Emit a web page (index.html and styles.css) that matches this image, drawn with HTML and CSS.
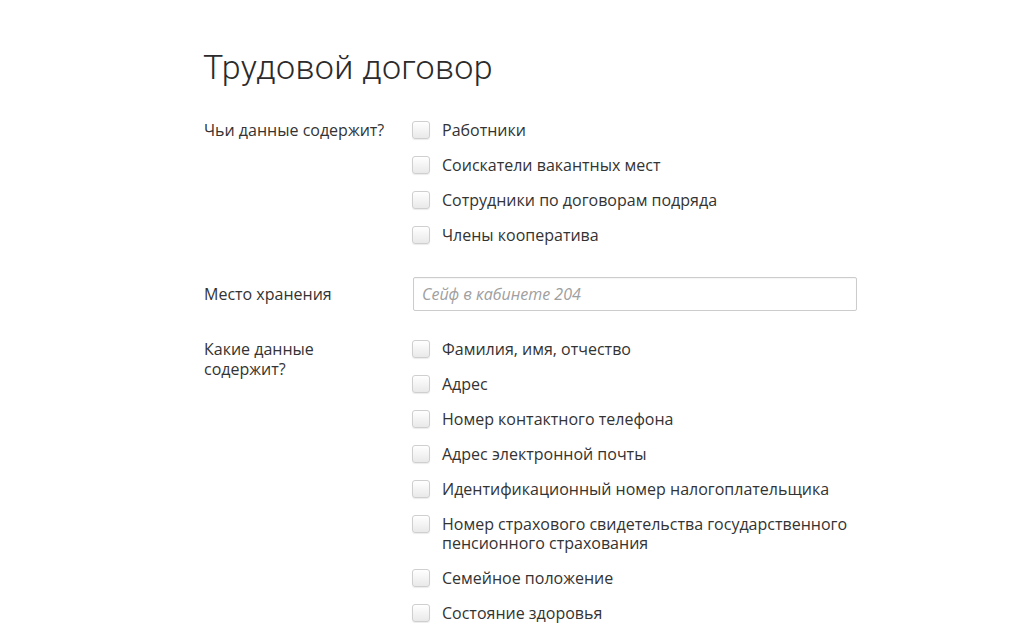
FILE: index.html
```html
<!DOCTYPE html>
<html lang="ru">
<head>
<meta charset="utf-8">
<title>Трудовой договор</title>
<link rel="stylesheet" href="styles.css">
</head>
<body>
<main class="page">
  <h1 class="title">Трудовой договор</h1>

  <section class="field">
    <div class="label">Чьи данные содержит?</div>
    <ul class="checks">
      <li class="check"><span class="box"></span><span class="text">Работники</span></li>
      <li class="check"><span class="box"></span><span class="text">Соискатели вакантных мест</span></li>
      <li class="check"><span class="box"></span><span class="text">Сотрудники по договорам подряда</span></li>
      <li class="check"><span class="box"></span><span class="text">Члены кооператива</span></li>
    </ul>
  </section>

  <section class="field field-input">
    <div class="label">Место хранения</div>
    <input class="input" type="text" placeholder="Сейф в кабинете 204">
  </section>

  <section class="field">
    <div class="label">Какие данные<br>содержит?</div>
    <ul class="checks">
      <li class="check"><span class="box"></span><span class="text">Фамилия, имя, отчество</span></li>
      <li class="check"><span class="box"></span><span class="text">Адрес</span></li>
      <li class="check"><span class="box"></span><span class="text">Номер контактного телефона</span></li>
      <li class="check"><span class="box"></span><span class="text">Адрес электронной почты</span></li>
      <li class="check"><span class="box"></span><span class="text">Идентификационный номер налогоплательщика</span></li>
      <li class="check"><span class="box"></span><span class="text">Номер страхового свидетельства государственного<br>пенсионного страхования</span></li>
      <li class="check"><span class="box"></span><span class="text">Семейное положение</span></li>
      <li class="check"><span class="box"></span><span class="text">Состояние здоровья</span></li>
    </ul>
  </section>
</main>
</body>
</html>
```

FILE: styles.css
```css
* { box-sizing: border-box; }

html, body {
  margin: 0;
  padding: 0;
  background: #ffffff;
}

body {
  font-family: "Open Sans", "Noto Sans", "DejaVu Sans", sans-serif;
  font-size: 16px;
  color: #333333;
  overflow: hidden;
}

.page {
  width: 652px;
  margin-left: 204px;
  padding-top: 42px;
}

.title {
  margin: 0 0 0 -1px;
  font-family: Roboto, "Open Sans", sans-serif;
  font-weight: 300;
  font-size: 34px;
  line-height: 50px;
  color: #2b2b2b;
  letter-spacing: 0.3px;
}

.field {
  display: grid;
  grid-template-columns: 208px 1fr;
  margin-top: 28px;
}

.field + .field {
  margin-top: 32px;
}

.field-input + .field {
  margin-top: 28px;
}

.label {
  line-height: 20px;
}

.field-input .label {
  align-self: center;
}

.checks {
  list-style: none;
  margin: 0;
  padding: 0;
  display: flex;
  flex-direction: column;
  gap: 15px;
}

.check {
  display: flex;
  align-items: flex-start;
  line-height: 20px;
}

.box {
  flex: none;
  width: 18px;
  height: 18px;
  margin-top: 1px;
  margin-right: 12px;
  border: 1px solid #cfcfcf;
  border-radius: 3px;
  background: linear-gradient(#ffffff, #e9e9e9);
  box-shadow: 0 1px 1px rgba(0, 0, 0, 0.08);
}

.text {
  line-height: 19px;
  padding-top: 1px;
}

.input {
  height: 34px;
  width: 100%;
  margin-left: 1px;
  border: 1px solid #cccccc;
  border-radius: 2px;
  padding: 0 8px;
  font-family: inherit;
  font-size: 16px;
  color: #333;
  box-shadow: inset 0 1px 1px rgba(0, 0, 0, 0.04);
  outline: none;
}

.input::placeholder {
  color: #a0a0a0;
  font-style: italic;
}
```
